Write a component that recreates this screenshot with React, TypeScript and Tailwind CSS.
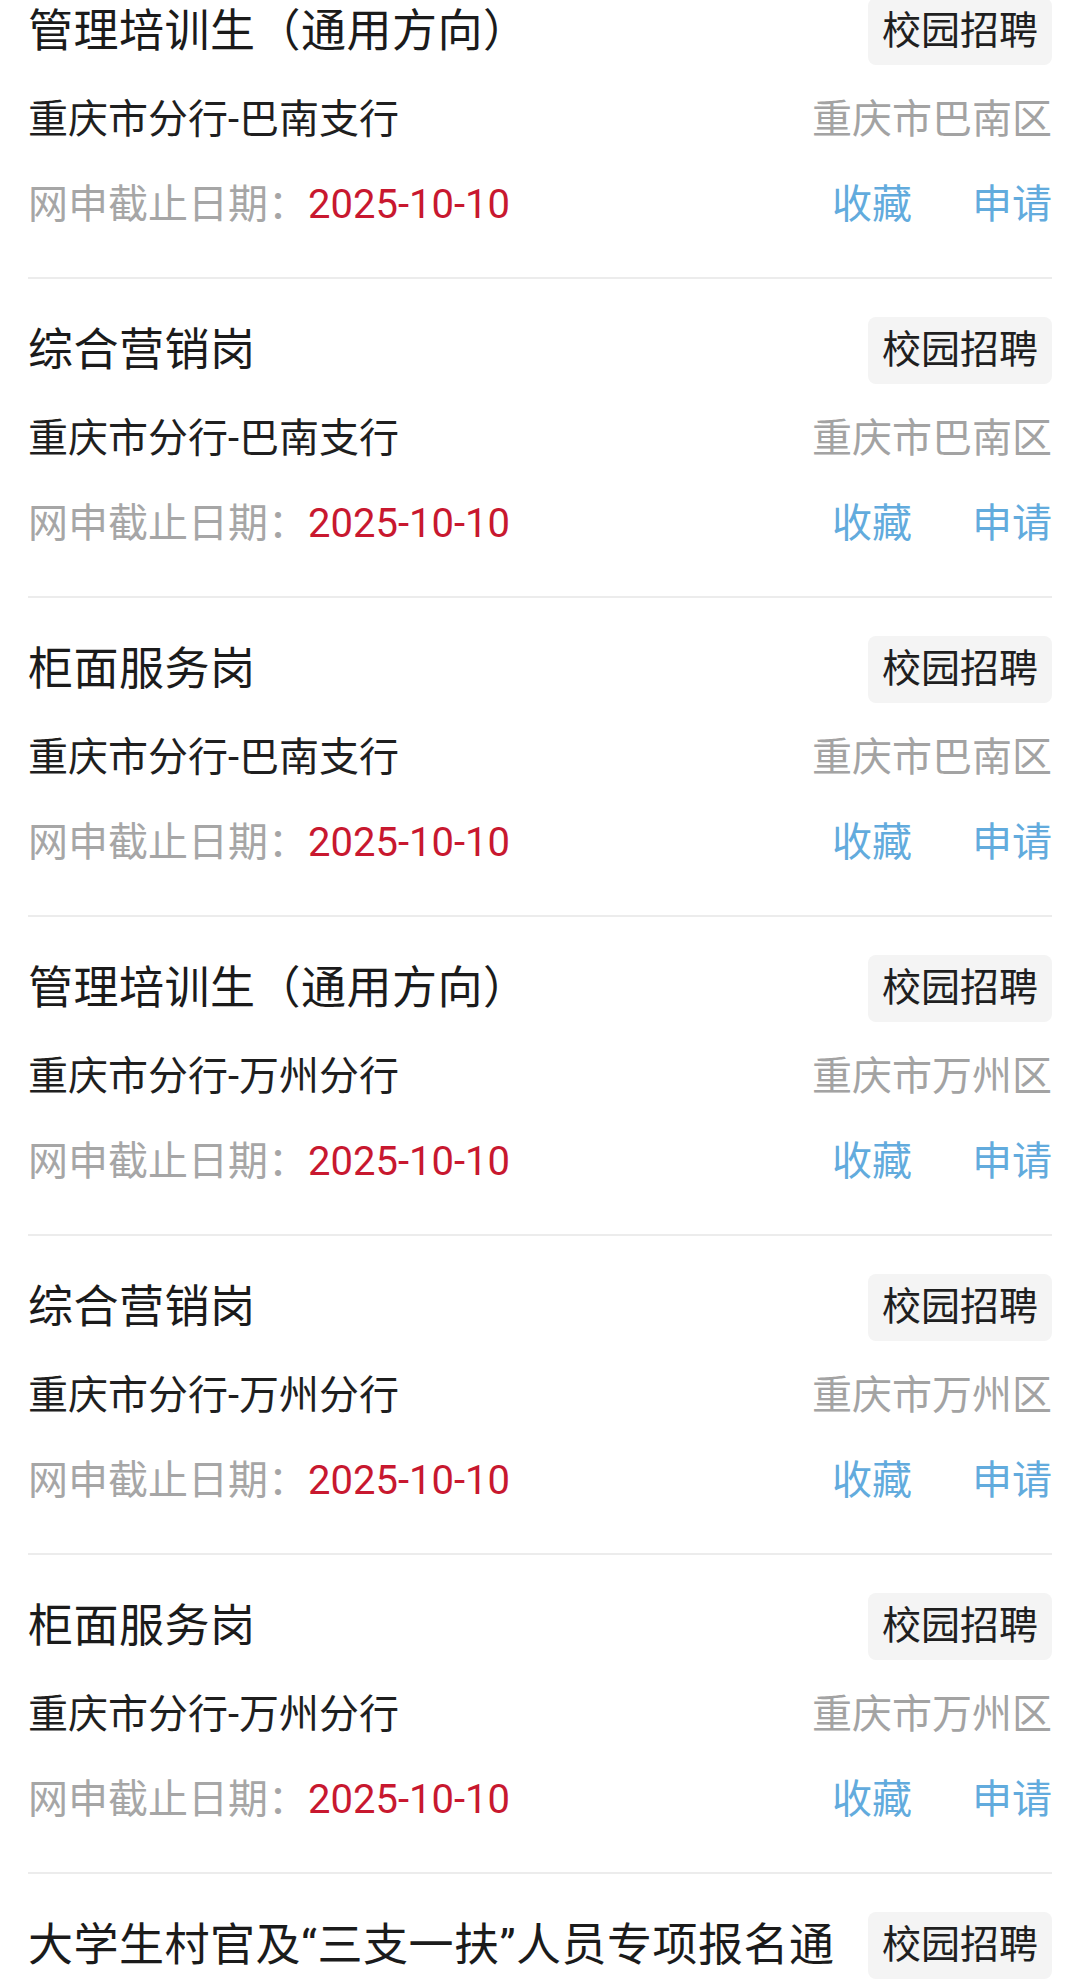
import type { ReactNode } from 'react';

type Job = {
  title: string;
  branch: string;
  area: string;
  deadline: string;
};

const jobs: Job[] = [
  { title: '管理培训生（通用方向）', branch: '重庆市分行-巴南支行', area: '重庆市巴南区', deadline: '2025-10-10' },
  { title: '综合营销岗', branch: '重庆市分行-巴南支行', area: '重庆市巴南区', deadline: '2025-10-10' },
  { title: '柜面服务岗', branch: '重庆市分行-巴南支行', area: '重庆市巴南区', deadline: '2025-10-10' },
  { title: '管理培训生（通用方向）', branch: '重庆市分行-万州分行', area: '重庆市万州区', deadline: '2025-10-10' },
  { title: '综合营销岗', branch: '重庆市分行-万州分行', area: '重庆市万州区', deadline: '2025-10-10' },
  { title: '柜面服务岗', branch: '重庆市分行-万州分行', area: '重庆市万州区', deadline: '2025-10-10' },
  { title: '大学生村官及“三支一扶”人员专项报名通道', branch: '重庆市分行', area: '重庆市', deadline: '2025-10-10' },
];

function Row({ children, className }: { children: ReactNode; className: string }) {
  return <div className={`flex items-center justify-between ${className}`}>{children}</div>;
}

function JobItem({ job }: { job: Job }) {
  return (
    <div className="border-b-2 border-[#ececec] pt-[38px] pb-[47px]">
      <Row className="h-[67px] gap-[18px]">
        {/* 한 줄만 보이고 넘치는 글자는 통째로 다음 줄로 숨김 */}
        <div className="h-[67px] min-w-0 flex-1 overflow-hidden break-all text-[45px] leading-[67px] tracking-[0.5px] text-[#1b1b1b]">
          {job.title}
        </div>
        <span className="flex h-[67px] w-[184px] shrink-0 items-center justify-center rounded-lg bg-[#f4f4f4] text-[39px] text-[#1f1f1f]">
          校园招聘
        </span>
      </Row>
      <Row className="mt-[30px] h-[50px]">
        <span className="text-[40px] text-[#1f1f1f]">{job.branch}</span>
        <span className="text-[40px] text-[#a3a3a3]">{job.area}</span>
      </Row>
      <Row className="mt-[35px] h-[50px]">
        <span className="text-[40px] text-[#a6a6a6]">
          网申截止日期：<span className="text-[#c8182f]">{job.deadline}</span>
        </span>
        <span className="flex gap-[60px] text-[40px] text-[#62abdd]">
          <span>收藏</span>
          <span>申请</span>
        </span>
      </Row>
    </div>
  );
}

export default function App() {
  return (
    <div
      className="h-[1981px] overflow-hidden bg-white"
      style={{ fontFamily: 'Roboto, "Noto Sans CJK SC", sans-serif' }}
    >
      <div className="-mt-[40px] px-[28px]">
        {jobs.map((job, i) => (
          <JobItem key={i} job={job} />
        ))}
      </div>
    </div>
  );
}
